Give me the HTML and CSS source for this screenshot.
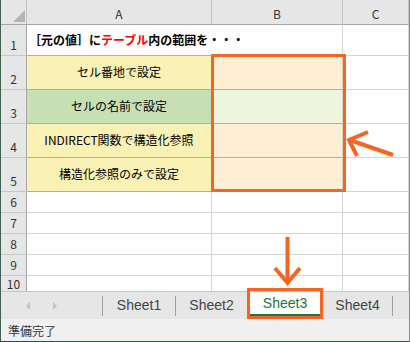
FILE: index.html
```html
<!DOCTYPE html>
<html lang="ja">
<head>
    <meta charset="UTF-8">
    <title>Sheet3</title>
    <link rel="stylesheet" href="styles.css">
</head>
<body>
    <div class="screen">
        <div class="window">
            <div class="sheet">
                <!-- header row -->
                <div class="hdr corner"><span class="tri"></span></div>
                <div class="hdr col">A</div>
                <div class="hdr col">B</div>
                <div class="hdr col">C</div>

                <div class="rh">1</div>
                <div class="cell title gold">［元の値］に<span class="red">テーブル</span>内の範囲を・・・</div>
                <div class="cell gold"></div>
                <div class="cell"></div>

                <div class="rh">2</div>
                <div class="cell yellow gold">セル番地で設定</div>
                <div class="cell peach gold"></div>
                <div class="cell"></div>

                <div class="rh">3</div>
                <div class="cell green gold">セルの名前で設定</div>
                <div class="cell mint gold"></div>
                <div class="cell"></div>

                <div class="rh">4</div>
                <div class="cell yellow gold">INDIRECT関数で構造化参照</div>
                <div class="cell peach gold"></div>
                <div class="cell"></div>

                <div class="rh">5</div>
                <div class="cell yellow gold">構造化参照のみで設定</div>
                <div class="cell peach gold"></div>
                <div class="cell"></div>

                <div class="rh">6</div><div class="cell"></div><div class="cell"></div><div class="cell"></div>
                <div class="rh">7</div><div class="cell"></div><div class="cell"></div><div class="cell"></div>
                <div class="rh">8</div><div class="cell"></div><div class="cell"></div><div class="cell"></div>
                <div class="rh">9</div><div class="cell"></div><div class="cell"></div><div class="cell"></div>
                <div class="rh last">10</div><div class="cell last"></div><div class="cell last"></div><div class="cell last"></div>
            </div>

            <div class="tabbar">
                <div class="nav">
                    <svg width="8" height="10" viewBox="0 0 8 10"><path d="M6 1 L2 5 L6 9 Z" fill="#c4c4c4"/></svg>
                    <svg width="8" height="10" viewBox="0 0 8 10"><path d="M2 1 L6 5 L2 9 Z" fill="#c4c4c4"/></svg>
                </div>
                <span class="sep"></span>
                <div class="tab t1">Sheet1</div>
                <span class="sep"></span>
                <div class="tab t2">Sheet2</div>
                <div class="tab t3 active">Sheet3</div>
                <div class="tab t4">Sheet4</div>
                <span class="sep"></span>
            </div>

            <div class="status">準備完了</div>
        </div>

        <!-- annotations drawn over the sheet -->
        <svg class="marks" width="410" height="342" viewBox="0 0 410 342">
            <g fill="none" stroke="#f26522" stroke-width="3">
                <rect x="212.5" y="55.5" width="132" height="135"/>
                <rect x="248.5" y="289.5" width="73" height="28"/>
            </g>
            <g fill="none" stroke="#f26522" stroke-width="4">
                <line x1="393" y1="155" x2="351" y2="140.5"/>
                <polyline points="368,132 349,140 357,156"/>
                <line x1="287.5" y1="237" x2="287.5" y2="281"/>
                <polyline points="275,268 287.5,283 300,268"/>
            </g>
        </svg>
    </div>
</body>
</html>
```

FILE: styles.css
```css
body {
    margin: 0;
    font-family: "Noto Sans CJK JP", "Noto Sans", sans-serif;
    background: #fff;
}

.screen {
    position: relative;
    width: 410px;
    height: 342px;
    overflow: hidden;
}

.window {
    width: 410px;
    height: 342px;
    box-sizing: border-box;
    border-left: 1px solid #3f6150;
    border-right: 1px solid #8c8c8c;
    border-bottom: 1px solid #1f5a3a;
    display: flex;
    flex-direction: column;
    background: #fff;
}

.sheet {
    display: grid;
    grid-template-columns: 26px 185px 131px 66px;
    grid-template-rows: 25px 31px 34px 34px 34px 34px 21px 21px 21px 21px 15px;
}

.sheet > div {
    box-sizing: border-box;
    border-right: 1px solid #d4d4d4;
    border-bottom: 1px solid #d4d4d4;
    font-size: 12px;
    color: #000;
    white-space: nowrap;
    overflow: hidden;
}

/* headers */
.hdr {
    background: #e6e6e6;
    border-bottom-color: #a6a6a6 !important;
    border-right-color: #c2c2c2 !important;
    display: flex;
    align-items: center;
    justify-content: center;
    color: #333 !important;
    padding-top: 2px;
}

.corner {
    position: relative;
}

.tri {
    position: absolute;
    right: 1px;
    bottom: 2px;
    width: 0;
    height: 0;
    border-left: 12px solid transparent;
    border-bottom: 12px solid #b4b4b4;
}

.rh {
    background: #e6e6e6;
    border-right-color: #a6a6a6 !important;
    border-bottom-color: #c8c8c8 !important;
    color: #333 !important;
    display: flex;
    align-items: flex-end;
    justify-content: center;
    padding-bottom: 2px;
    line-height: 16px;
}

.rh.last {
    align-items: flex-start;
    padding-bottom: 0;
    line-height: 15px;
    border-bottom: none !important;
}

.cell.last {
    border-bottom: none !important;
}

/* cells */
.cell {
    display: flex;
    align-items: center;
    justify-content: center;
    padding-bottom: 2px;
}

.cell.title {
    justify-content: flex-start;
    font-weight: bold;
    padding-left: 2px;
    overflow: visible !important;
    border-right: none !important;
    position: relative;
    z-index: 1;
}

.red {
    color: #ff0000;
}

.gold {
    border-bottom-color: #d4b32c !important;
}

.yellow {
    background: #faf1b5;
}

.green {
    background: #c6e0b4;
}

.peach {
    background: #fdeed4;
}

.mint {
    background: #eef5df;
}

/* sheet tabs */
.tabbar {
    height: 28px;
    box-sizing: border-box;
    border-top: 1px solid #c6c6c6;
    background: #e6e6e6;
    display: flex;
    align-items: center;
    font-family: "Liberation Sans", Arial, sans-serif;
    font-size: 14px;
    color: #444;
}

.nav {
    width: 101px;
    display: flex;
    justify-content: center;
    gap: 19px;
    padding-right: 20px;
    box-sizing: border-box;
}

.sep {
    width: 1px;
    height: 20px;
    background: #a0a0a0;
}

.tab {
    height: 100%;
    display: flex;
    align-items: center;
    justify-content: center;
    padding-bottom: 1px;
    box-sizing: border-box;
}

.t1 { width: 72px; }
.t2 { width: 71px; }
.t3 { width: 76px; }
.t4 { width: 69px; }

.tab.active {
    align-self: flex-start;
    height: 24px;
    background: #fff;
    color: #217346;
    border-bottom: 2px solid #217346;
    padding-bottom: 0;
}

.status {
    height: 22px;
    background: #f0f0f0;
    font-size: 12px;
    color: #333;
    padding-left: 7px;
    display: flex;
    align-items: center;
}

.marks {
    position: absolute;
    left: 0;
    top: 0;
    pointer-events: none;
}
```
